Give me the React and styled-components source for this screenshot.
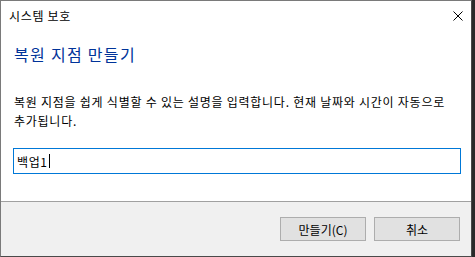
import React from 'react';
import styled, { createGlobalStyle } from 'styled-components';

const GlobalStyle = createGlobalStyle`
  html, body {
    margin: 0;
    padding: 0;
    background: #2a2a2a;
  }
  body {
    font-family: "Noto Sans CJK KR", "Noto Sans", sans-serif;
  }
`;

export default function App() {
  return (
    <>
      <GlobalStyle />
      <Window>
        <TitleBar>
          <TitleText>시스템 보호</TitleText>
          <CloseButton aria-label="닫기">
            <svg width="10" height="10" viewBox="0 0 10 10">
              <path d="M0.5 0.5 L9.5 9.5 M9.5 0.5 L0.5 9.5" stroke="#000" strokeWidth="1" fill="none" />
            </svg>
          </CloseButton>
        </TitleBar>
        <Content>
          <Heading>복원 지점 만들기</Heading>
          <Description>
            복원 지점을 쉽게 식별할 수 있는 설명을 입력합니다. 현재 날짜와 시간이 자동으로
            <br />
            추가됩니다.
          </Description>
          <TextBox>
            백업1
            <Caret />
          </TextBox>
        </Content>
        <Footer>
          <Button>만들기(C)</Button>
          <Button>취소</Button>
        </Footer>
      </Window>
    </>
  );
}

const Window = styled.div`
    display: flex;
    flex-direction: column;
    box-sizing: border-box;
    width: 472px;
    height: 257px;
    background: #fff;
    border: 1px solid #7a7a7a;
    border-right-color: #4a4a4a;
    border-bottom-color: #4a4a4a;
`;

const TitleBar = styled.div`
    display: flex;
    align-items: center;
    justify-content: space-between;
    height: 30px;
    padding-left: 8px;
`;

const TitleText = styled.span`
    font-size: 12px;
    line-height: 16px;
    letter-spacing: 0.7px;
    color: #000;
`;

const CloseButton = styled.div`
    display: flex;
    align-items: center;
    justify-content: center;
    width: 46px;
    height: 30px;
    margin-right: -10px;
`;

const Content = styled.div`
    display: flex;
    flex-direction: column;
    flex: 1;
    padding: 12px 10px 0 12px;
`;

const Heading = styled.h1`
    margin: 0 0 0 1px;
    font-size: 16px;
    font-weight: 400;
    line-height: 22px;
    letter-spacing: 1.3px;
    color: #003399;
`;

const Description = styled.p`
    margin: 27px 0 0 1px;
    font-size: 12px;
    line-height: 19px;
    letter-spacing: 0.75px;
    white-space: nowrap;
    color: #000;
`;

const TextBox = styled.div`
    display: flex;
    align-items: center;
    box-sizing: border-box;
    height: 26px;
    margin-top: 18px;
    padding-left: 3px;
    border: 1px solid #0078d7;
    font-size: 12px;
    letter-spacing: 0.6px;
    color: #000;
`;

const Caret = styled.span`
    display: inline-block;
    width: 1px;
    height: 14px;
    margin-left: 1px;
    background: #000;
`;

const Footer = styled.div`
    display: flex;
    justify-content: flex-end;
    gap: 8px;
    height: 55px;
    box-sizing: border-box;
    padding: 15px 11px 0 0;
    background: #f0f0f0;
    border-top: 1px solid #a0a0a0;
`;

const Button = styled.div`
    display: flex;
    align-items: center;
    justify-content: center;
    box-sizing: border-box;
    width: 86px;
    height: 24px;
    background: #e1e1e1;
    border: 1px solid #adadad;
    font-size: 12px;
    color: #000;
`;
